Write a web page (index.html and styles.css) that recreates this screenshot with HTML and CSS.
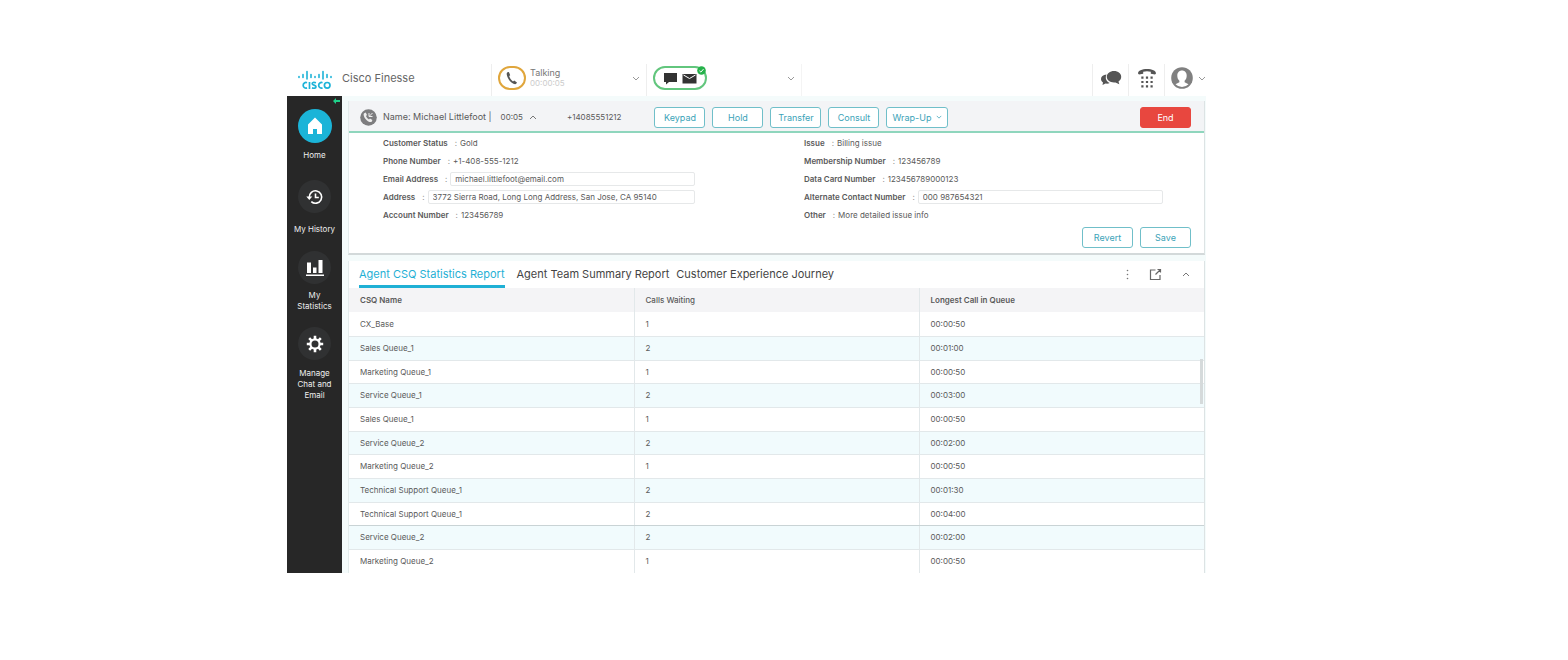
FILE: index.html
```html
<!DOCTYPE html>
<html lang="en">
<head>
  <meta charset="UTF-8" />
  <meta name="viewport" content="width=device-width, initial-scale=1.0"/>
  <title>Cisco Finesse</title>
  <link rel="stylesheet" href="styles.css">
</head>
<body>
  <div class="app">
    <header class="topbar">
      <div class="brand">
        <svg class="logo" width="34" height="20" viewBox="0 0 34 20" role="img" aria-label="Cisco">
          <g stroke="#1db3d8" stroke-width="1.6" stroke-linecap="round">
            <path d="M1 6.5v1M5 4.5v3M9 1.5v7.500M13 4.500v3M17 6.500v1M21 4.500v3M25 1.500v7.500M29 4.500v3M33 6.500v1"/>
          </g>
          <g fill="none" stroke="#1db3d8" stroke-width="1.700">
            <path d="M9 12.700a2.800 2.800 0 1 0 0 5.200M11.500 12v7M18 12.800c-2.500-.800-3.800-.300-3.800.900 0 1.800 3.800.900 3.800 3 0 1.600-2 1.900-4 1.200M24.500 12.700a2.800 2.800 0 1 0 0 5.200"/>
            <circle cx="29.200" cy="15.300" r="2.800"/>
          </g>
        </svg>
        <h1>Cisco Finesse</h1>
      </div>

      <button class="state voice" type="button">
        <span class="pill pill-voice">
          <svg width="14" height="14" viewBox="0 0 14 14"><path fill="#555" d="M2.400 1.300 3.900.900l1.300 3.300-1 .9c.5 2.200 1.900 4 3.800 5.300l1.200-.8 2.800 1.800-.8 1.400c-.6.500-1.600.5-2.700 0C4.900 10.800 2.200 7 1.700 3.200c-.1-.9.200-1.500.7-1.900z"/></svg>
        </span>
        <span class="state-text">Talking<small>00:00:05</small></span>
        <svg class="chev" width="8" height="5" viewBox="0 0 8 5"><path d="M1 1l3 3 3-3"/></svg>
      </button>

      <button class="state digital" type="button" aria-label="Chat and email state">
        <span class="pill pill-digital">
          <svg width="15" height="13" viewBox="0 0 15 13"><path fill="#333" d="M1 1h13v9H6l-3 2.500V10H1z"/></svg>
          <svg width="15" height="11" viewBox="0 0 15 11"><path fill="#333" d="M.500 1h14v9.500H.500z"/><path fill="none" stroke="#fff" d="M1.500 2l6 3.500 6-3.500"/></svg>
          <svg class="ok" width="9" height="9" viewBox="0 0 9 9"><circle cx="4.500" cy="4.500" r="4.300" fill="#26b24b"/><path fill="none" stroke="#fff" d="M2.500 4.800l1.400 1.300 2.600-3"/></svg>
        </span>
        <svg class="chev" width="8" height="5" viewBox="0 0 8 5"><path d="M1 1l3 3 3-3"/></svg>
      </button>

      <div class="tools">
        <button type="button" aria-label="Chat">
          <svg width="22" height="17" viewBox="0 0 22 17" fill="#555"><path d="M6.500 4.500C3 4.800 1 6.700 1 9c0 1.500.8 2.700 2 3.500L2.500 15l3-1.500c1.500.3 3 .1 4.200-.5C7 11.800 5.500 9.500 5.800 7c.1-1 .3-1.700.7-2.500z"/><path d="M14 1c4.200 0 7.200 2.500 7.200 5.800 0 2-1 3.700-2.700 4.700l.8 2.800-3.800-1.900C10.500 13 6.800 10.500 6.800 6.800 6.800 3.500 10 1 14 1z"/></svg>
        </button>
        <button type="button" aria-label="Dial pad">
          <svg width="20" height="21" viewBox="0 0 20 21" fill="#555"><path d="M1 5.500C1 2.500 5 1 10 1s9 1.500 9 4.500l-1 1-4.200-.8V3.800a14 14 0 0 0-7.600 0v1.900L2 6.500z"/><path d="M4.300 8.500h2.200v2.200H4.300zM8.900 8.500h2.200v2.200H8.900zM13.500 8.500h2.200v2.200h-2.200zM4.300 12.900h2.200v2.200H4.300zM8.900 12.900h2.200v2.200H8.900zM13.500 12.900h2.200v2.200h-2.200zM4.300 17.300h2.200v2.200H4.300zM8.900 17.300h2.200v2.200H8.900zM13.500 17.300h2.200v2.200h-2.200z"/></svg>
        </button>
        <button class="user" type="button" aria-label="User options">
          <svg width="22" height="22" viewBox="0 0 22 22"><circle cx="11" cy="11" r="10.800" fill="#808080"/><path fill="#fff" d="M11 3.500c2.900 0 4.700 2.200 4.700 5.200 0 2.200-.8 4-2.100 5v1.600l3.900 1.900A9.500 9.500 0 0 1 11 20a9.500 9.500 0 0 1-6.500-2.800l3.900-1.900v-1.600c-1.300-1-2.100-2.800-2.100-5 0-3 1.800-5.200 4.700-5.200z"/></svg>
          <svg class="chev" width="8" height="5" viewBox="0 0 8 5"><path d="M1 1l3 3 3-3"/></svg>
        </button>
      </div>
    </header>

    <div class="body">
      <nav class="sidebar">
        <svg class="pin" width="7" height="6" viewBox="0 0 7 6"><path fill="#1fd08a" d="M0 3l3-3v2h4v2H3v2z"/></svg>
        <a class="active" href="#home">
          <span class="nav-icon"><svg width="20" height="20" viewBox="0 0 20 20"><path fill="#fff" d="M10 1.500 3 8.500V18h5v-5h4v5h5V8.500z"/></svg></span>
          Home
        </a>
        <a class="history" href="#history">
          <span class="nav-icon"><svg width="18" height="16" viewBox="0 0 18 16"><path fill="none" stroke="#fff" stroke-width="1.600" d="M3.300 8.500a6.200 6.200 0 1 1 2 4.100M9.500 4.500v4h3.300"/><path fill="#fff" d="M.3 7.500h6L3.300 11z"/></svg></span>
          My History
        </a>
        <a class="stats" href="#statistics">
          <span class="nav-icon"><svg width="20" height="18" viewBox="0 0 20 18"><path fill="#fff" d="M2 3.500h4V14H2zM8 8.500h3.500V14H8zM13.500 1h4v13h-4zM1 15.500h18V17H1z"/></svg></span>
          My Statistics
        </a>
        <a class="manage" href="#manage">
          <span class="nav-icon"><svg width="18" height="18" viewBox="0 0 18 18"><g stroke="#fff" stroke-width="2.600"><path d="M9 .8v3.400M9 13.800v3.400M.8 9h3.400M13.800 9h3.400M3.200 3.200l2.400 2.400M12.400 12.400l2.400 2.400M3.200 14.800l2.400-2.400M12.400 5.600l2.400-2.400"/></g><circle cx="9" cy="9" r="4.600" fill="none" stroke="#fff" stroke-width="2.200"/></svg></span>
          Manage Chat and Email
        </a>
      </nav>

      <main>
        <section class="panel call">
          <div class="call-header">
            <svg class="call-icon" width="17" height="17" viewBox="0 0 17 17"><circle cx="8.500" cy="8.500" r="8.300" fill="#7d7d7f"/><path fill="#eee" d="M4.200 4.200l1.500-.7L7 6l-1 1c.5 1.500 1.600 2.700 3 3.500l1-.9 2.400 1.500-.7 1.600c-1 .7-2.800.3-4.700-1.200C4.800 9.700 3.600 7 3.600 5.200c0-.4.200-.8.600-1z"/><path fill="none" stroke="#eee" d="M9 4v3.500h3.500M9.500 7l3-3"/></svg>
            <span class="caller">Name: Michael Littlefoot |</span>
            <span class="timer">00:05</span>
            <svg class="chev up" width="8" height="5" viewBox="0 0 8 5"><path d="M1 4l3-3 3 3"/></svg>
            <span class="dialed">+14085551212</span>
            <div class="actions">
              <button class="btn" type="button">Keypad</button>
              <button class="btn" type="button">Hold</button>
              <button class="btn" type="button">Transfer</button>
              <button class="btn" type="button">Consult</button>
              <button class="btn wrapup" type="button">Wrap-Up <svg class="chev" width="6" height="4" viewBox="0 0 8 5"><path d="M1 1l3 3 3-3"/></svg></button>
            </div>
            <button class="btn end" type="button">End</button>
          </div>

          <form class="details">
            <div class="fields">
              <div class="field"><b>Customer Status</b><i>:</i><span>Gold</span></div>
              <div class="field"><b>Phone Number</b><i>:</i><span>+1-408-555-1212</span></div>
              <div class="field"><label for="email">Email Address</label><i>:</i><input id="email" type="text" value="michael.littlefoot@email.com"></div>
              <div class="field"><label for="address">Address</label><i>:</i><input id="address" type="text" value="3772 Sierra Road, Long Long Address, San Jose, CA 95140"></div>
              <div class="field"><b>Account Number</b><i>:</i><span>123456789</span></div>
            </div>
            <div class="fields">
              <div class="field"><b>Issue</b><i>:</i><span>Billing issue</span></div>
              <div class="field"><b>Membership Number</b><i>:</i><span>123456789</span></div>
              <div class="field"><b>Data Card Number</b><i>:</i><span>123456789000123</span></div>
              <div class="field"><label for="alt">Alternate Contact Number</label><i>:</i><input id="alt" type="text" value="000 987654321"></div>
              <div class="field"><b>Other</b><i>:</i><span>More detailed issue info</span></div>
            </div>
          </form>
          <div class="form-actions">
            <button class="btn" type="button">Revert</button>
            <button class="btn" type="button">Save</button>
          </div>
        </section>

        <section class="panel report">
          <div class="tabs">
            <a class="tab current" href="#csq">Agent CSQ Statistics Report</a>
            <a class="tab" href="#team">Agent Team Summary Report</a>
            <a class="tab" href="#journey">Customer Experience Journey</a>
            <div class="tab-tools">
              <button type="button" aria-label="More"><svg width="3" height="11" viewBox="0 0 3 11" fill="#777"><circle cx="1.500" cy="1.500" r=".8"/><circle cx="1.500" cy="5.500" r=".8"/><circle cx="1.500" cy="9.500" r=".8"/></svg></button>
              <button type="button" aria-label="Open in new window"><svg width="13" height="13" viewBox="0 0 13 13" fill="none" stroke="#666" stroke-width="1.200"><path d="M6.500 2H1.500v9.500H11V7M6.500 6.500 11 2M8.500 1.500h3v3"/></svg></button>
              <button type="button" aria-label="Collapse"><svg class="chev up" width="8" height="5" viewBox="0 0 8 5"><path d="M1 4l3-3 3 3"/></svg></button>
            </div>
          </div>
          <div class="table-wrap">
            <table>
              <thead>
                <tr><th>CSQ Name</th><th class="light">Calls Waiting</th><th>Longest Call in Queue</th></tr>
              </thead>
              <tbody>
                <tr><td>CX_Base</td><td>1</td><td>00:00:50</td></tr>
                <tr><td>Sales Queue_1</td><td>2</td><td>00:01:00</td></tr>
                <tr><td>Marketing Queue_1</td><td>1</td><td>00:00:50</td></tr>
                <tr><td>Service Queue_1</td><td>2</td><td>00:03:00</td></tr>
                <tr><td>Sales Queue_1</td><td>1</td><td>00:00:50</td></tr>
                <tr><td>Service Queue_2</td><td>2</td><td>00:02:00</td></tr>
                <tr><td>Marketing Queue_2</td><td>1</td><td>00:00:50</td></tr>
                <tr><td>Technical Support Queue_1</td><td>2</td><td>00:01:30</td></tr>
                <tr><td>Technical Support Queue_1</td><td>2</td><td>00:04:00</td></tr>
              </tbody>
              <tbody class="more">
                <tr><td>Service Queue_2</td><td>2</td><td>00:02:00</td></tr>
                <tr><td>Marketing Queue_2</td><td>1</td><td>00:00:50</td></tr>
              </tbody>
            </table>
            <span class="scroll-thumb"></span>
          </div>
        </section>
      </main>
    </div>
  </div>
</body>
</html>
```

FILE: styles.css
```css
:root {
  --accent: #1fb0d5;
  --btn-color: #3ba3b8;
  --btn-border: #70bfc9;
  --green-line: #8fd6bd;
  --text-color: #5a5a5a;
  --line: #e2e8ea;
  --stripe: #f1fbfd;
  --dark: #272727;
}
* {
  box-sizing: border-box;
}
body {
  margin: 0;
  background-color: #fff;
  color: var(--text-color);
  font-family: Inter, "Liberation Sans", Arial, sans-serif;
  font-size: 8px;
  line-height: 12px;
}
button {
  font-family: inherit;
  background: none;
  border: none;
  padding: 0;
  cursor: pointer;
}
a {
  color: inherit;
  text-decoration: none;
}
svg {
  display: block;
  flex: none;
}
.chev path {
  fill: none;
  stroke: #999;
  stroke-width: 1;
}
.chev.up path {
  stroke: #777;
}
.app {
  padding: 64px 362px 0 287px;
}

/* top bar */
.topbar {
  display: flex;
  height: 32px;
}
.brand {
  display: flex;
  align-items: center;
  gap: 10px;
  width: 204px;
  padding: 0 0 4px 11px;
}
.logo {
  margin-top: 4px;
}
h1 {
  margin: 0;
  font-size: 11px;
  font-weight: 400;
  color: #666;
}
.state {
  display: flex;
  align-items: center;
  width: 155px;
  padding: 0 6px 4px;
  border-left: 1px solid #eee;
  text-align: left;
}
.state .chev {
  margin-left: auto;
}
.state.digital {
  width: 156px;
  border-right: 1px solid #f4f4f4;
}
.pill {
  display: flex;
  align-items: center;
  justify-content: center;
  height: 24px;
  border: 2px solid #e0a63c;
  border-radius: 12px;
}
.pill-voice {
  width: 28px;
}
.pill-digital {
  position: relative;
  gap: 4px;
  width: 54px;
  border-color: #62c67d;
}
.ok {
  position: absolute;
  top: -2px;
  right: -1px;
}
.state-text {
  margin-left: 4px;
  font-size: 9px;
  line-height: 10px;
  color: #777;
}
.state-text small {
  display: block;
  font-size: 8px;
  color: #ccc;
}
.tools {
  display: flex;
  margin-left: auto;
}
.tools button {
  display: flex;
  align-items: center;
  justify-content: center;
  width: 36px;
  padding-bottom: 4px;
  border-left: 1px solid #eee;
}
.tools .user {
  justify-content: flex-end;
  gap: 5px;
  width: 42px;
}

/* sidebar */
.body {
  display: flex;
}
.sidebar {
  display: flex;
  flex-direction: column;
  align-items: center;
  width: 55px;
  padding-top: 2px;
  background-color: var(--dark);
  color: #eee;
  line-height: 11px;
  text-align: center;
}
.pin {
  align-self: flex-end;
  margin-right: 2px;
}
.sidebar a {
  display: flex;
  flex-direction: column;
  align-items: center;
  gap: 8px;
  max-width: 48px;
}
.sidebar .active {
  gap: 7px;
  margin: 5px 0 19px;
}
.sidebar .history {
  gap: 11px;
  max-width: none;
  margin-bottom: 16px;
}
.sidebar .stats {
  gap: 6px;
  margin-bottom: 15px;
}
.nav-icon {
  display: flex;
  align-items: center;
  justify-content: center;
  width: 33px;
  height: 33px;
  border-radius: 50%;
  background-color: #303132;
}
.active .nav-icon {
  width: 34px;
  height: 34px;
  background-color: #1bb4d8;
}

/* panels */
main {
  flex: 1;
  display: flex;
  flex-direction: column;
  gap: 6px;
  padding: 5px 1px 0 6px;
  background-color: #f4fbfb;
}
.panel {
  background-color: #fff;
  border-left: 1px solid #e3ecec;
  border-right: 1px solid #dde3e4;
}
.call {
  padding-bottom: 5px;
  border-bottom: 2px solid #d3d9da;
}
.call-header {
  display: flex;
  align-items: center;
  height: 32px;
  padding: 2px 13px 0 11px;
  background-color: #f3f4f6;
  border-bottom: 2px solid var(--green-line);
}
.caller {
  margin-left: 6px;
  font-size: 9px;
}
.timer {
  margin: 0 6px 0 9px;
}
.dialed {
  margin-left: 30px;
}
.actions {
  display: flex;
  gap: 7px;
  margin-left: 33px;
}
.btn {
  width: 51px;
  height: 21px;
  border: 1px solid var(--btn-border);
  border-radius: 3px;
  background-color: #fff;
  color: var(--btn-color);
  font-size: 9px;
}
.wrapup {
  display: flex;
  align-items: center;
  justify-content: center;
  gap: 5px;
  width: 62px;
}
.wrapup .chev path {
  stroke: var(--btn-color);
}
.end {
  margin-left: auto;
  border-color: #e8473f;
  background-color: #e8473f;
  color: #fff;
}
.details {
  display: grid;
  grid-template-columns: 312fr 359fr;
  column-gap: 109px;
  padding: 1px 41px 3px 34px;
}
.field {
  display: flex;
  align-items: center;
  height: 18px;
}
.field b,
.field label {
  font-weight: 600;
}
.field i {
  margin: 0 3px 0 7px;
  font-style: normal;
  color: #888;
}
.field input {
  flex: 1;
  min-width: 0;
  height: 14px;
  padding: 0 4px;
  border: 1px solid #e6e8e9;
  border-radius: 2px;
  background-color: #fff;
  color: inherit;
  font-family: inherit;
  font-size: 8px;
}
.form-actions {
  display: flex;
  justify-content: flex-end;
  gap: 7px;
  padding-right: 13px;
}

/* report */
.tabs {
  display: flex;
  gap: 7px;
  height: 27px;
  padding: 0 14px 0 10px;
}
.tab {
  padding: 6px 0;
  font-size: 11px;
  line-height: 14px;
  color: #444;
}
.tab.current {
  margin-right: 5px;
  border-bottom: 3px solid var(--accent);
  padding-bottom: 4px;
  color: var(--accent);
}
.tab-tools {
  display: flex;
  align-items: center;
  gap: 20px;
  margin-left: auto;
}
.table-wrap {
  position: relative;
}
table {
  width: 100%;
  border-collapse: collapse;
  table-layout: fixed;
}
th,
td {
  height: 24px;
  padding: 0 11px;
  border-bottom: 1px solid var(--line);
  text-align: left;
}
th {
  background-color: #f4f4f6;
  border-bottom: none;
  font-weight: 600;
}
th.light {
  font-weight: 500;
}
th + th,
td + td {
  border-left: 1px solid var(--line);
}
tr:nth-child(3n) td {
  height: 23px;
}
tbody tr:nth-child(even),
.more tr:nth-child(odd) {
  background-color: var(--stripe);
}
.more tr:nth-child(even) {
  background-color: #fff;
}
tbody tr:last-child td {
  border-bottom-color: #c9d3d5;
}
.more tr:last-child td {
  border-bottom: none;
}
.scroll-thumb {
  position: absolute;
  top: 71px;
  right: 1px;
  width: 3px;
  height: 45px;
  background-color: #d5dadb;
}
```
